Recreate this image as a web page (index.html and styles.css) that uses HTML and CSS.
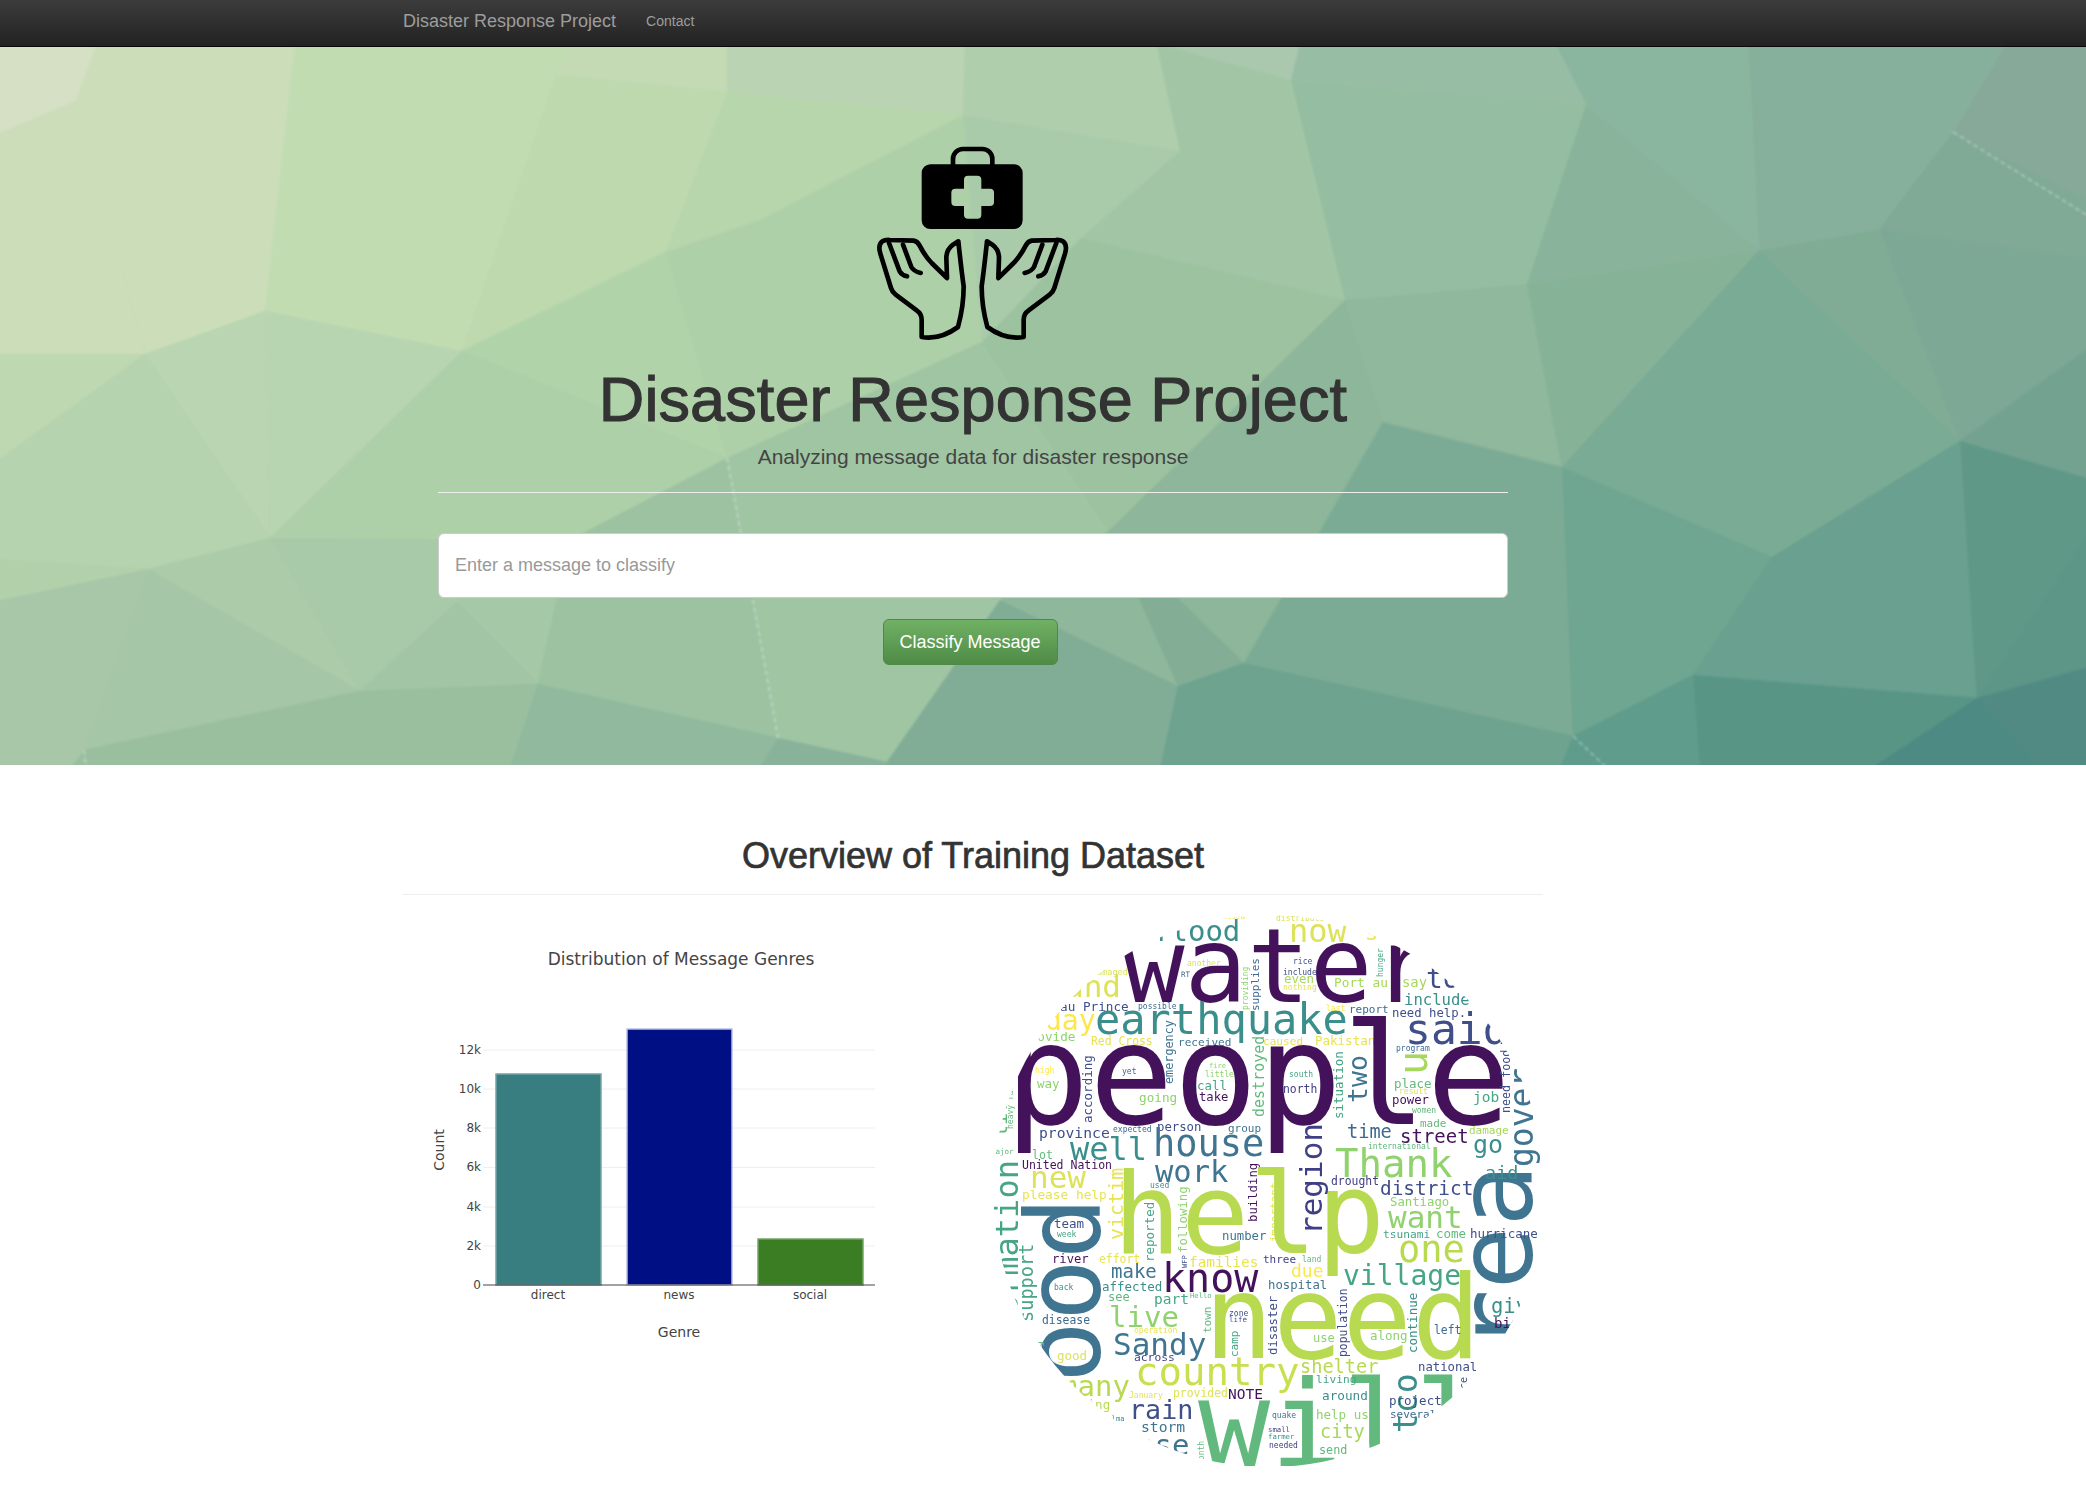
FILE: index.html
```html
<!DOCTYPE html>
<html lang="en">
<head>
<meta charset="utf-8">
<title>Disaster Response Project</title>
<link rel="stylesheet" href="styles.css">
</head>
<body>
<nav class="navbar">
  <div class="container nav-row">
    <a class="brand" href="#">Disaster Response Project</a>
    <a class="nav-link" href="#">Contact</a>
  </div>
</nav>
<section class="hero">
  <svg class="mesh" viewBox="-4 43 2094 726" aria-hidden="true">
    <defs><linearGradient id="heroBase" x1="0" y1="0" x2="1" y2="1"><stop offset="0" stop-color="#d6e2c4"/><stop offset=".5" stop-color="#9dc3a0"/><stop offset="1" stop-color="#4f8c84"/></linearGradient></defs>
    <rect x="-4" y="43" width="2094" height="726" fill="url(#heroBase)"/>
    <polygon fill="#d5e0c5" points="-4,43 97,43 76,101 -4,135"/>
    <polygon fill="#cbdeb9" points="97,43 295,43 265,311 145,354 76,101"/>
    <polygon fill="#cbddb9" points="-4,135 76,101 145,354 -4,354"/>
    <polygon fill="#c2dcb2" points="295,43 575,43 556,75 462,351 265,311"/>
    <polygon fill="#c3dab5" points="556,75 575,43 727,43 727,92"/>
    <polygon fill="#bdd9ad" points="556,75 727,92 666,252 462,351"/>
    <polygon fill="#b9d3b3" points="727,43 965,43 963,115 727,92"/>
    <polygon fill="#b8d6ac" points="727,92 963,115 760,220 666,252"/>
    <polygon fill="#aed0a8" points="666,252 760,220 963,115 982,342 727,458"/>
    <polygon fill="#b0d3aa" points="462,351 666,252 727,458"/>
    <polygon fill="#bed8b2" points="-4,354 145,354 -4,462"/>
    <polygon fill="#b9d5b1" points="145,354 265,311 270,538"/>
    <polygon fill="#b5d3ae" points="145,354 270,538 148,569 -4,559 -4,462"/>
    <polygon fill="#b8d5b1" points="265,311 462,351 270,538"/>
    <polygon fill="#aed0a9" points="462,351 727,458 570,540 270,538"/>
    <polygon fill="#b2d1ab" points="-4,559 148,569 -4,601"/>
    <polygon fill="#accba9" points="148,569 270,538 360,691"/>
    <polygon fill="#a8caa8" points="270,538 570,540 457,602 360,691"/>
    <polygon fill="#a8c7a9" points="-4,601 148,569 84,750 70,769 -4,769"/>
    <polygon fill="#a5c6a7" points="148,569 360,691 84,750"/>
    <polygon fill="#9abf9f" points="84,750 360,691 340,769 70,769"/>
    <polygon fill="#99bf9f" points="360,691 538,684 510,769 340,769"/>
    <polygon fill="#a2c5a5" points="360,691 457,602 538,684"/>
    <polygon fill="#a5c8a6" points="457,602 570,540 538,684"/>
    <polygon fill="#9cc2a1" points="570,540 727,458 778,738 538,684"/>
    <polygon fill="#90b99d" points="538,684 778,738 760,769 510,769"/>
    <polygon fill="#a0c5a3" points="727,458 982,342 1109,531 1000,600 887,762 778,738"/>
    <polygon fill="#88b29a" points="778,738 887,762 887,769 760,769"/>
    <polygon fill="#81ad97" points="887,762 1000,600 1178,686 1160,769 887,769"/>
    <polygon fill="#8fb79b" points="1000,600 1109,531 1178,686"/>
    <polygon fill="#83ae95" points="1109,531 1244,663 1178,686"/>
    <polygon fill="#9cc2a0" points="982,342 1081,238 1345,300 1109,531"/>
    <polygon fill="#8db69a" points="1109,531 1345,300 1383,422 1244,663"/>
    <polygon fill="#a9cbaa" points="963,115 1180,151 1081,238 982,342"/>
    <polygon fill="#afceac" points="965,43 1156,43 1180,151 963,115"/>
    <polygon fill="#a2c6a5" points="1156,43 1291,80 1345,300 1081,238 1180,151"/>
    <polygon fill="#a9c8ae" points="1156,43 1300,43 1291,80"/>
    <polygon fill="#97bda5" points="1291,80 1300,43 1555,43 1586,104"/>
    <polygon fill="#95bda1" points="1291,80 1586,104 1527,284 1345,300"/>
    <polygon fill="#8fb89d" points="1345,300 1527,284 1562,467 1383,422"/>
    <polygon fill="#7cab95" points="1383,422 1562,467 1573,736 1244,663"/>
    <polygon fill="#6ea38f" points="1244,663 1573,736 1560,769 1160,769 1178,686"/>
    <polygon fill="#8ab59f" points="1586,104 1555,43 1748,43 1759,250"/>
    <polygon fill="#89b49b" points="1586,104 1759,250 1527,284"/>
    <polygon fill="#86b298" points="1527,284 1759,250 1562,467"/>
    <polygon fill="#87b09c" points="1748,43 2006,43 1953,132 1879,229 1759,250"/>
    <polygon fill="#7aab95" points="1759,250 1960,441 1772,557 1562,467"/>
    <polygon fill="#80ac96" points="1759,250 1879,229 1960,441"/>
    <polygon fill="#80a996" points="1879,229 1953,132 2090,200 2090,259"/>
    <polygon fill="#87a99a" points="1953,132 2006,43 2090,43 2090,200"/>
    <polygon fill="#7ca895" points="1879,229 2090,259 2090,347 1960,441"/>
    <polygon fill="#74a291" points="1960,441 2090,347 2090,479"/>
    <polygon fill="#6fa691" points="1562,467 1772,557 1693,675 1573,736"/>
    <polygon fill="#69a08f" points="1772,557 1960,441 1977,698 1693,675"/>
    <polygon fill="#609888" points="1960,441 2090,479 2090,530 1977,698"/>
    <polygon fill="#5d9587" points="1977,698 2090,530 2090,667"/>
    <polygon fill="#508a83" points="1977,698 2090,667 2090,769 2040,769"/>
    <polygon fill="#589585" points="1693,675 1977,698 1870,769 1700,769"/>
    <polygon fill="#5f9c8b" points="1573,736 1693,675 1700,769 1560,769"/>
    <polygon fill="#4d8a83" points="1870,769 1977,698 2040,769"/>
    <path class="mesh-dash" d="M1953 132 L2090 217 M727 458 L778 738 M1573 736 L1608 769 M84 750 L86 769"/>
  </svg>
  <div class="hero-inner">
    <svg class="logo" viewBox="100 40 600 600" aria-hidden="true">
      <path class="kit" fill-rule="evenodd" d="M272 104 H523 a26 26 0 0 1 26 26 V272 a26 26 0 0 1 -26 26 H272 a26 26 0 0 1 -26 -26 V130 a26 26 0 0 1 26 -26 z M385 138 h28 a12 12 0 0 1 12 12 v27 h26 a12 12 0 0 1 12 12 v28 a12 12 0 0 1 -12 12 h-26 v26 a12 12 0 0 1 -12 12 h-28 a12 12 0 0 1 -12 -12 v-26 h-26 a12 12 0 0 1 -12 -12 v-28 a12 12 0 0 1 12 -12 h26 v-27 a12 12 0 0 1 12 -12 z"/>
      <path class="line" d="M340 106 V88 a30 30 0 0 1 30 -30 h58 a30 30 0 0 1 30 30 V106"/>
      <g class="line">
        <path d="M246 622 V570 Q246 552 232 543 L168 495 Q158 488 154 475 L122 372 Q114 345 128 335 Q136 330 150 331 L222 333 Q234 335 240 348 Q255 378 276 400 L322 445 L320 385 Q320 360 340 345 L356 335 Q365 420 372 470 Q372 530 355 592 Q300 632 246 622 Z"/>
        <path d="M148 340 L180 425 Q186 436 202 440 M190 345 L215 412 Q222 425 243 430"/>
      </g>
      <g class="line" transform="matrix(-1 0 0 1 798 0)">
        <path d="M246 622 V570 Q246 552 232 543 L168 495 Q158 488 154 475 L122 372 Q114 345 128 335 Q136 330 150 331 L222 333 Q234 335 240 348 Q255 378 276 400 L322 445 L320 385 Q320 360 340 345 L356 335 Q365 420 372 470 Q372 530 355 592 Q300 632 246 622 Z"/>
        <path d="M148 340 L180 425 Q186 436 202 440 M190 345 L215 412 Q222 425 243 430"/>
      </g>
    </svg>
    <h1 class="hero-title">Disaster Response Project</h1>
    <p class="hero-sub">Analyzing message data for disaster response</p>
    <hr class="hero-rule">
    <form class="classify">
      <input class="query" type="text" placeholder="Enter a message to classify">
      <button class="submit" type="button">Classify Message</button>
    </form>
  </div>
</section>
<main class="container">
  <h2 class="section-title">Overview of Training Dataset</h2>
  <hr class="section-rule">
  <div class="charts">
    <svg class="chart" viewBox="403 895 570 593" role="img" aria-label="Distribution of Message Genres">
      <g class="grid">
        <line x1="483" x2="875" y1="1246" y2="1246"/><line x1="483" x2="875" y1="1207" y2="1207"/><line x1="483" x2="875" y1="1167.5" y2="1167.5"/><line x1="483" x2="875" y1="1128" y2="1128"/><line x1="483" x2="875" y1="1089" y2="1089"/><line x1="483" x2="875" y1="1050" y2="1050"/>
      </g>
      <rect class="bar direct" x="496" y="1074" width="105" height="211"/>
      <rect class="bar news" x="627" y="1029" width="105" height="256"/>
      <rect class="bar social" x="758" y="1239" width="105" height="46"/>
      <line class="axis" x1="483" x2="875" y1="1285" y2="1285"/>
      <text class="chart-title" x="681" y="965">Distribution of Message Genres</text>
      <g class="ytick">
        <text x="481" y="1289">0</text><text x="481" y="1250">2k</text><text x="481" y="1211">4k</text><text x="481" y="1171">6k</text><text x="481" y="1132">8k</text><text x="481" y="1093">10k</text><text x="481" y="1054">12k</text>
      </g>
      <g class="xtick">
        <text x="548" y="1299">direct</text><text x="679" y="1299">news</text><text x="810" y="1299">social</text>
      </g>
      <text class="axis-label" x="679" y="1337">Genre</text>
      <text class="axis-label" transform="rotate(-90 444 1150)" x="444" y="1150">Count</text>
    </svg>
    <svg class="cloud" viewBox="988 895 570 593" role="img" aria-label="Word cloud">
      <defs><clipPath id="disc"><circle cx="1269" cy="1191" r="276"/></clipPath></defs>
      <g clip-path="url(#disc)">
        <text class="c-t" x="1153" y="941" font-size="29">flood</text>
        <text class="c-p" x="1122" y="1002" font-size="104">water</text>
        <text class="c-d" x="1065" y="997" font-size="31">and</text>
        <text class="c-d" x="1092" y="975" font-size="8.5">damaged</text>
        <text class="c-d" x="1187" y="966" font-size="8">another</text>
        <text class="c-s" x="1181" y="977" font-size="7.5">RT</text>
        <text class="c-s" x="1259" y="1011" font-size="11" transform="rotate(-90 1259 1011)">supplies</text>
        <text class="c-n" x="1248" y="1010" font-size="8" transform="rotate(-90 1248 1010)">providing</text>
        <text class="c-s" x="1138" y="1009" font-size="8">possible</text>
        <text class="c-b" x="1060" y="1011" font-size="12.7">au Prince</text>
        <text class="c-y" x="1045" y="1030" font-size="28">day</text>
        <text class="c-t" x="1095" y="1034" font-size="42">earthquake</text>
        <text class="c-n" x="1022" y="1041" font-size="12.7">provide</text>
        <text class="c-e" x="1091" y="1045" font-size="11.4">Red Cross</text>
        <text class="c-l" x="1178" y="1046" font-size="11.1">received</text>
        <text class="c-l" x="1173" y="1084" font-size="11.8" transform="rotate(-90 1173 1084)">emergency</text>
        <text class="c-m" x="1264" y="1117" font-size="15" transform="rotate(-90 1264 1117)">destroyed</text>
        <text class="c-e" x="1263" y="1045" font-size="11.1">caused</text>
        <text class="c-e" x="1315" y="1045" font-size="12.5">Pakistan</text>
        <text class="c-p" x="1005" y="1124" font-size="140">people</text>
        <text class="c-y" x="1035" y="1073" font-size="8">high</text>
        <text class="c-s" x="1122" y="1074" font-size="8">yet</text>
        <text class="c-n" x="1209" y="1068" font-size="7">fire</text>
        <text class="c-n" x="1205" y="1077" font-size="8">little</text>
        <text class="c-n" x="1037" y="1088" font-size="12.5">way</text>
        <text class="c-g" x="1197" y="1090" font-size="12.4">call</text>
        <text class="c-n" x="1139" y="1102" font-size="12.7">going</text>
        <text class="c-p" x="1199" y="1101" font-size="12.2">take</text>
        <text class="c-b" x="1092" y="1123" font-size="12.5" transform="rotate(-90 1092 1123)">according</text>
        <text class="c-m" x="1013" y="1129" font-size="8" transform="rotate(-90 1013 1129)">heavy rain</text>
        <text class="c-m" x="1007" y="1137" font-size="20" transform="rotate(-90 1007 1137)">lif</text>
        <text class="c-b" x="1157" y="1131" font-size="12.3">person</text>
        <text class="c-l" x="1228" y="1132" font-size="11">group</text>
        <text class="c-b" x="1039" y="1138" font-size="14.7">province</text>
        <text class="c-s" x="1113" y="1132" font-size="8">expected</text>
        <text class="c-t" x="1070" y="1160" font-size="32">well</text>
        <text class="c-l" x="1153" y="1156" font-size="37">house</text>
        <text class="c-m" x="991" y="1154" font-size="7.5">major</text>
        <text class="c-m" x="1032" y="1159" font-size="11.7">lot</text>
        <text class="c-p" x="1022" y="1169" font-size="11.5">United Nation</text>
        <text class="c-d" x="1030" y="1188" font-size="31">new</text>
        <text class="c-l" x="1155" y="1182" font-size="30.5">work</text>
        <text class="c-t" x="1150" y="1188" font-size="8">used</text>
        <text class="c-e" x="1022" y="1199" font-size="12.8">please help</text>
        <text class="c-g" x="1018" y="1372" font-size="32" transform="rotate(-90 1018 1372)">information</text>
        <text class="c-l" x="1100" y="1383" font-size="103" transform="rotate(-90 1100 1383)">ood</text>
        <text class="c-b" x="1054" y="1228" font-size="12.5">team</text>
        <text class="c-g" x="1057" y="1237" font-size="8">week</text>
        <text class="c-e" x="1123" y="1240" font-size="20" transform="rotate(-90 1123 1240)">victim</text>
        <text class="c-g" x="1154" y="1262" font-size="12.5" transform="rotate(-90 1154 1262)">reported</text>
        <text class="c-n" x="1187" y="1253" font-size="12.3" transform="rotate(-90 1187 1253)">following</text>
        <text class="c-b" x="1187" y="1268" font-size="7" transform="rotate(-90 1187 1268)">WFP</text>
        <text class="c-p" x="1257" y="1222" font-size="12.3" transform="rotate(-90 1257 1222)">building</text>
        <text class="c-e" x="1278" y="1242" font-size="11" transform="rotate(-90 1278 1242)">important</text>
        <text class="c-l" x="1222" y="1240" font-size="12.3">number</text>
        <text class="c-i" x="1263" y="1263" font-size="11">three</text>
        <text class="c-p" x="1052" y="1263" font-size="12.2">river</text>
        <text class="c-e" x="1099" y="1263" font-size="11.4">effort</text>
        <text class="c-e" x="1189" y="1267" font-size="14.4">families</text>
        <text class="c-l" x="1111" y="1278" font-size="19">make</text>
        <text class="c-p" x="1162" y="1292" font-size="40">know</text>
        <text class="c-g" x="1033" y="1322" font-size="18.6" transform="rotate(-90 1033 1322)">support</text>
        <text class="c-t" x="1054" y="1290" font-size="8">back</text>
        <text class="c-t" x="1102" y="1291" font-size="12.5">affected</text>
        <text class="c-l" x="1268" y="1289" font-size="12.3">hospital</text>
        <text class="c-m" x="1108" y="1301" font-size="12">see</text>
        <text class="c-g" x="1154" y="1304" font-size="14.5">part</text>
        <text class="c-m" x="1190" y="1298" font-size="7.2">Hello</text>
        <text class="c-b" x="1277" y="1355" font-size="12.3" transform="rotate(-90 1277 1355)">disaster</text>
        <text class="c-m" x="1211" y="1333" font-size="11" transform="rotate(-90 1211 1333)">town</text>
        <text class="c-b" x="1229" y="1316" font-size="8">zone</text>
        <text class="c-b" x="1229" y="1322" font-size="7.5">life</text>
        <text class="c-n" x="1109" y="1327" font-size="29">live</text>
        <text class="c-s" x="1042" y="1324" font-size="11.4">disease</text>
        <text class="c-e" x="1134" y="1333" font-size="8">operation</text>
        <text class="c-g" x="1238" y="1357" font-size="11" transform="rotate(-90 1238 1357)">camp</text>
        <text class="c-l" x="1113" y="1355" font-size="31">Sandy</text>
        <text class="c-i" x="1134" y="1361" font-size="11.3">across</text>
        <text class="c-d" x="1057" y="1360" font-size="12.5">good</text>
        <text class="c-m" x="1042" y="1353" font-size="10" transform="rotate(-90 1042 1353)">ng</text>
        <text class="c-c" x="1135" y="1385" font-size="39">country</text>
        <text class="c-h" x="1060" y="1396" font-size="29">many</text>
        <text class="c-e" x="1129" y="1398" font-size="8">January</text>
        <text class="c-d" x="1173" y="1397" font-size="11.4">provided</text>
        <text class="c-p" x="1228" y="1399" font-size="14.5">NOTE</text>
        <text class="c-h" x="1065" y="1409" font-size="12.5">making</text>
        <text class="c-b" x="1129" y="1419" font-size="26.7">rain</text>
        <text class="c-t" x="1103" y="1421" font-size="7.2">Delma</text>
        <text class="c-l" x="1141" y="1432" font-size="14.7">storm</text>
        <text class="c-l" x="1137" y="1455" font-size="29">ase</text>
        <text class="c-m" x="1204" y="1465" font-size="8" transform="rotate(-90 1204 1465)">month</text>
        <text class="c-m" x="1198" y="1466" font-size="120">will</text>
        <text class="c-h" x="1113" y="1253" font-size="113">help</text>
        <text class="c-h" x="1204" y="1358" font-size="115">need</text>
        <text class="c-l" x="1532" y="1352" font-size="104" transform="rotate(-90 1532 1352)">rea</text>
        <text class="c-l" x="1533" y="1167" font-size="33" transform="rotate(-90 1533 1167)">government</text>
        <text class="c-b" x="1510" y="1113" font-size="11.7" transform="rotate(-90 1510 1113)">need food</text>
        <text class="c-t" x="1485" y="1179" font-size="18.5">aid</text>
        <text class="c-t" x="1473" y="1153" font-size="25">go</text>
        <text class="c-o" x="1469" y="1134" font-size="11">damage</text>
        <text class="c-m" x="1420" y="1127" font-size="11">made</text>
        <text class="c-g" x="1473" y="1102" font-size="14.5">job</text>
        <text class="c-m" x="1412" y="1113" font-size="8">women</text>
        <text class="c-d" x="1399" y="1094" font-size="8">result</text>
        <text class="c-m" x="1394" y="1088" font-size="12.5">place</text>
        <text class="c-p" x="1392" y="1104" font-size="12.3">power</text>
        <text class="c-o" x="1427" y="1075" font-size="40" transform="rotate(-90 1427 1075)">u</text>
        <text class="c-l" x="1367" y="1103" font-size="26.5" transform="rotate(-90 1367 1103)">two</text>
        <text class="c-g" x="1343" y="1119" font-size="12.5" transform="rotate(-90 1343 1119)">situation</text>
        <text class="c-i" x="1283" y="1093" font-size="11.4">north</text>
        <text class="c-g" x="1289" y="1077" font-size="8">south</text>
        <text class="c-s" x="1396" y="1051" font-size="8">program</text>
        <text class="c-b" x="1405" y="1044" font-size="43">said</text>
        <text class="c-b" x="1392" y="1017" font-size="12.3">need help.</text>
        <text class="c-s" x="1349" y="1013" font-size="11">report</text>
        <text class="c-y" x="1326" y="1011" font-size="8">last</text>
        <text class="c-e" x="1283" y="990" font-size="8">nothing</text>
        <text class="c-o" x="1284" y="983" font-size="12.5">even</text>
        <text class="c-b" x="1283" y="975" font-size="8">include</text>
        <text class="c-b" x="1293" y="964" font-size="8">rice</text>
        <text class="c-g" x="1383" y="977" font-size="8" transform="rotate(-90 1383 977)">hunger</text>
        <text class="c-o" x="1334" y="987" font-size="12.8">Port au</text>
        <text class="c-o" x="1402" y="987" font-size="13.9">say</text>
        <text class="c-t" x="1404" y="1005" font-size="15.6">include</text>
        <text class="c-b" x="1426" y="988" font-size="28">to</text>
        <text class="c-d" x="1289" y="942" font-size="32">now</text>
        <text class="c-d" x="1276" y="921" font-size="8">distribute</text>
        <text class="c-e" x="1218" y="919" font-size="7.5">raised</text>
        <text class="c-e" x="1365" y="940" font-size="22">s</text>
        <text class="c-n" x="1335" y="1177" font-size="39">Thank</text>
        <text class="c-s" x="1347" y="1138" font-size="18.6">time</text>
        <text class="c-p" x="1400" y="1143" font-size="19">street</text>
        <text class="c-m" x="1368" y="1149" font-size="8">international</text>
        <text class="c-i" x="1322" y="1235" font-size="31" transform="rotate(-90 1322 1235)">region</text>
        <text class="c-i" x="1331" y="1185" font-size="11.4">drought</text>
        <text class="c-b" x="1380" y="1195" font-size="19.4">district</text>
        <text class="c-n" x="1390" y="1206" font-size="12.3">Santiago</text>
        <text class="c-n" x="1388" y="1228" font-size="31">want</text>
        <text class="c-g" x="1383" y="1238" font-size="11.2">tsunami</text>
        <text class="c-m" x="1436" y="1238" font-size="12.5">come</text>
        <text class="c-b" x="1470" y="1238" font-size="12.5">hurricane</text>
        <text class="c-h" x="1398" y="1262" font-size="37">one</text>
        <text class="c-g" x="1343" y="1285" font-size="28">village</text>
        <text class="c-m" x="1302" y="1262" font-size="8">land</text>
        <text class="c-y" x="1291" y="1277" font-size="18">due</text>
        <text class="c-t" x="1491" y="1313" font-size="20.5">give</text>
        <text class="c-p" x="1494" y="1328" font-size="14">big</text>
        <text class="c-s" x="1434" y="1334" font-size="11.4">left</text>
        <text class="c-n" x="1313" y="1342" font-size="12">use</text>
        <text class="c-b" x="1347" y="1357" font-size="11.4" transform="rotate(-90 1347 1357)">population</text>
        <text class="c-n" x="1370" y="1340" font-size="12.5">along</text>
        <text class="c-t" x="1417" y="1353" font-size="12.5" transform="rotate(-90 1417 1353)">continue</text>
        <text class="c-h" x="1300" y="1373" font-size="18.6">shelter</text>
        <text class="c-b" x="1418" y="1371" font-size="12.3">national</text>
        <text class="c-t" x="1417" y="1433" font-size="33" transform="rotate(-90 1417 1433)">tco</text>
        <text class="c-g" x="1316" y="1383" font-size="11.2">living</text>
        <text class="c-t" x="1322" y="1400" font-size="12.7">around</text>
        <text class="c-b" x="1389" y="1405" font-size="12.5">project</text>
        <text class="c-s" x="1390" y="1418" font-size="11">several</text>
        <text class="c-n" x="1316" y="1419" font-size="12.5">help us</text>
        <text class="c-l" x="1272" y="1418" font-size="8">quake</text>
        <text class="c-i" x="1268" y="1432" font-size="7.3">small</text>
        <text class="c-t" x="1268" y="1439" font-size="7.3">farmer</text>
        <text class="c-i" x="1269" y="1448" font-size="8">needed</text>
        <text class="c-o" x="1320" y="1438" font-size="18.6">city</text>
        <text class="c-m" x="1319" y="1454" font-size="11.8">send</text>
        <text class="c-b" x="1467" y="1389" font-size="10" transform="rotate(-90 1467 1389)">ce</text>
      </g>
    </svg>
  </div>
</main>
</body>
</html>
```

FILE: styles.css
```css
* { box-sizing: border-box; }
html, body { margin: 0; height: 1488px; overflow: hidden; background: #fff; }
body { font-family: "Liberation Sans", Arial, sans-serif; color: #333; font-size: 14px; }

.container { width: 1170px; margin-left: 388px; padding: 0 15px; }

.navbar { height: 47px; border-bottom: 1px solid #080808; background: linear-gradient(to bottom, #3c3c3c, #222); }
.nav-row { display: flex; align-items: center; height: 46px; }
.brand { font-size: 18px; color: #9d9d9d; text-decoration: none; margin-top: -4px; }
.nav-link { font-size: 14px; color: #9d9d9d; text-decoration: none; margin-left: 30px; margin-top: -4px; }

.hero { position: relative; height: 718px; overflow: hidden; }
.mesh { position: absolute; left: -4px; top: -4px; width: 2094px; height: 726px; filter: blur(1px); }
.mesh-dash { fill: none; stroke: rgba(255,255,255,.3); stroke-width: 2; stroke-dasharray: 5 3; }
.hero-inner { position: relative; width: 1070px; margin-left: 438px; padding-top: 96px; text-align: center; }
.logo { display: block; width: 200px; height: 200px; margin: 0 auto; }
.kit { fill: #000; }
.line, .line path { fill: none; stroke: #000; stroke-width: 14; stroke-linecap: round; stroke-linejoin: round; }

.hero-title { margin: 22px 0 0; font-size: 63px; line-height: 1.1; font-weight: 400; -webkit-text-stroke: 1.1px #333; color: #333; letter-spacing: .1px; }
.hero-sub { margin: 8px 0 0; font-size: 21px; line-height: 30px; color: #444; font-weight: 400; }
.hero-rule { border: 0; border-top: 1px solid #eee; margin: 20px 0 0; }

.classify { margin: 40px 0 0; }
.query { display: block; width: 100%; height: 65px; padding: 0 16px; border: 1px solid #ccc; border-radius: 6px; background: #fff; font: 18px "Liberation Sans", Arial, sans-serif; color: #555; }
.query::placeholder { color: #999; opacity: 1; }
.submit { display: block; width: 175px; height: 46px; margin: 21px auto 0; transform: translateX(-3px); border: 1px solid #4c8a46; border-radius: 6px; background: linear-gradient(to bottom, #70b164, #4f8b46); color: #fff; font: 18px "Liberation Sans", Arial, sans-serif; padding: 0; }

.section-title { margin: 71px 0 0; text-align: center; font-size: 36px; line-height: 1.1; font-weight: 400; -webkit-text-stroke: .7px #333; }
.section-rule { border: 0; border-top: 1px solid #eee; margin: 18px 0 0; }

.charts { display: grid; grid-template-columns: 570px 570px; column-gap: 15px; }
.chart, .cloud { display: block; width: 570px; height: 593px; }

.grid line { stroke: #eee; stroke-width: 1; }
.axis { stroke: #444; stroke-width: 1; }
.bar { stroke-width: 1.5; }
.direct { fill: #387d80; stroke: #74a4a6; }
.news { fill: #000f83; stroke: #b9bfe0; }
.social { fill: #3a7d23; stroke: #74a465; }
.chart text { font-family: "DejaVu Sans", Verdana, sans-serif; fill: #444; }
.chart-title { font-size: 17px; text-anchor: middle; }
.ytick text { font-size: 12px; text-anchor: end; }
.xtick text { font-size: 12px; text-anchor: middle; }
.axis-label { font-size: 14px; text-anchor: middle; }

.cloud { filter: blur(.35px); }
.cloud text { font-family: "DejaVu Sans Mono", "Liberation Mono", monospace; }
.c-p { fill: #44125a; }
.c-i { fill: #3f3f85; }
.c-b { fill: #3f4f8a; }
.c-s { fill: #3e6a90; }
.c-l { fill: #3f7590; }
.c-t { fill: #3a8f8d; }
.c-g { fill: #45a585; }
.c-m { fill: #62b97d; }
.c-n { fill: #8fd26e; }
.c-o { fill: #a6d85a; }
.c-h { fill: #b8da50; }
.c-c { fill: #c9df50; }
.c-d { fill: #dde25a; }
.c-e { fill: #e8e350; }
.c-y { fill: #fde74c; }
```
